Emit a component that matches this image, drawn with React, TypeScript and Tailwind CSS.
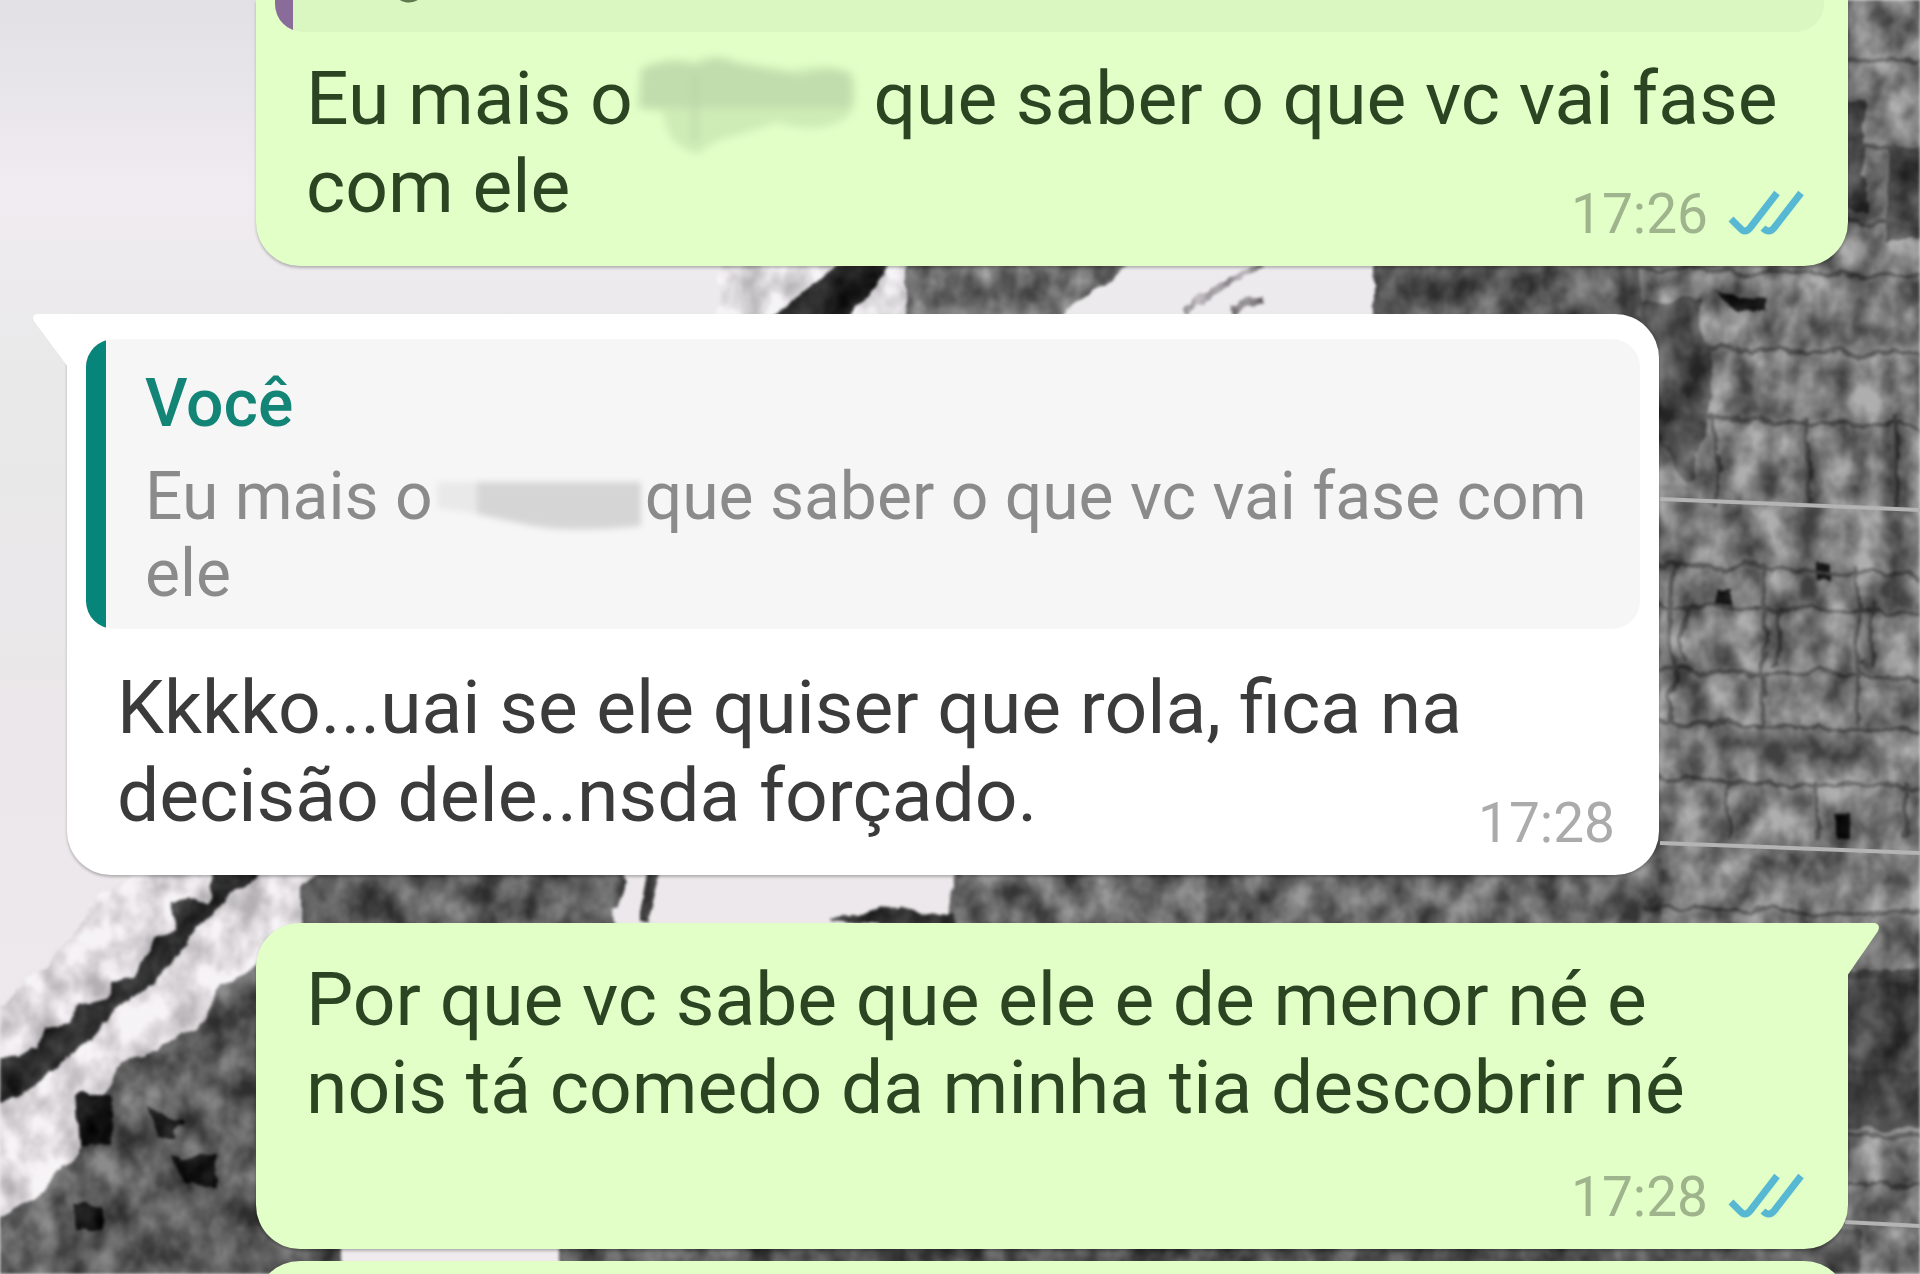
import type { ReactNode } from 'react';
import clsx from 'clsx';

type Side = 'sent' | 'received';

interface BubbleProps {
  readonly side: Side;
  readonly tail?: boolean;
  readonly className?: string;
  readonly children?: ReactNode;
}

interface MessageProps {
  readonly side: Side;
  readonly time: string;
  /** Puts the time on a row of its own below the text. */
  readonly timeBelow?: boolean;
  readonly children: ReactNode;
}

function Tail({ side }: { readonly side: Side }) {
  return side === 'received' ? (
    <svg aria-hidden viewBox="0 0 36 54" className="absolute top-0 right-full -mr-px h-[54px] w-9 fill-white">
      <path d="M36 0H5Q-1 1 2 7L36 53Z" />
    </svg>
  ) : (
    <svg aria-hidden viewBox="0 0 36 54" className="absolute top-0 left-full -ml-px h-[54px] w-9 fill-[#e1ffc7]">
      <path d="M0 0H28Q34 2 31 8L0 53Z" />
    </svg>
  );
}

function Ticks() {
  return (
    <svg role="img" aria-label="Lida" viewBox="0 0 76 48" className="mb-2 h-12 w-[76px] fill-none stroke-[#56b8d3] stroke-[7]">
      <path d="M3 29L12 38Q17 44 22 38L49 3" />
      <path d="M35 38Q41 44 46 38L73 3" />
    </svg>
  );
}

/** Smeared-out name in the sent message. */
function SentSmudge() {
  return (
    <svg aria-hidden viewBox="0 10 214 60" className="ml-2 inline-block h-[60px] w-[214px] overflow-visible align-[-4px]">
      <defs>
        <filter id="soft" x="-20%" y="-20%" width="140%" height="140%">
          <feGaussianBlur stdDeviation="4" />
        </filter>
      </defs>
      <g filter="url(#soft)">
        <path d="M0 10Q30 -4 54 4Q74 -8 96 4L150 12Q190 4 210 14Q218 30 212 50Q206 66 176 70Q150 70 138 64L94 78Q64 84 60 96Q46 94 34 84Q24 72 22 54L-4 50Z" fill="#cdecb6" />
        <path d="M0 12Q30 0 54 8Q74 -4 96 6L160 18Q190 6 210 18V50H0Z" fill="#c1ddad" />
        <path d="M54 14V84" stroke="#b9d4a7" strokeWidth="4" />
      </g>
    </svg>
  );
}

/** Smeared-out name in the quoted message. */
function QuoteSmudge() {
  return (
    <svg aria-hidden viewBox="0 0 212 60" className="inline-block h-[60px] w-[212px] overflow-visible align-[-13px]">
      <defs>
        <filter id="softer" x="-20%" y="-20%" width="140%" height="140%">
          <feGaussianBlur stdDeviation="3" />
        </filter>
      </defs>
      <g filter="url(#softer)">
        <path d="M4 10H100V46L60 44L4 36Z" fill="#e9e9e9" />
        <path d="M44 10H208V54Q130 62 90 52L44 42Z" fill="#d5d5d5" />
      </g>
    </svg>
  );
}

function Bubble({ side, tail, className, children }: BubbleProps) {
  return (
    <article
      className={clsx(
        'relative rounded-[44px] shadow-[0_2px_3px_rgba(0,0,0,0.25)]',
        side === 'sent' ? 'ml-[189px] bg-[#e1ffc7] text-[#2d4423]' : 'mr-[189px] bg-white text-[#3b3b3b]',
        tail && (side === 'sent' ? 'rounded-tr-none' : 'rounded-tl-none'),
        className
      )}
    >
      {tail && <Tail side={side} />}
      {children}
    </article>
  );
}

function Message({ side, time, timeBelow, children }: MessageProps) {
  return (
    <p className="flow-root pr-15 pb-5 pl-[50px] text-[75px] leading-[88px]">
      {children}
      <span
        className={clsx(
          'float-right -mr-4 flex items-end gap-5 text-[55px] leading-[64px]',
          timeBelow ? 'clear-both mt-[34px]' : 'mt-10',
          side === 'sent' ? 'text-[#9fb38c]' : 'text-[#ababab]'
        )}
      >
        <time>{time}</time>
        {side === 'sent' && <Ticks />}
      </span>
    </p>
  );
}

const COURSES = [52, 140, 214, 268, 345, 417, 565, 604, 668, 722, 778, 905, 972, 1060, 1128, 1176];
const JOINTS = [1672, 1716, 1764, 1806, 1858, 1893];

function Wallpaper() {
  return (
    <svg
      aria-hidden
      viewBox="0 0 1920 1274"
      preserveAspectRatio="xMidYMid slice"
      className="absolute inset-0 h-full w-full"
    >
      <defs>
        <filter id="rock" x="0" y="0" width="1920" height="1274" filterUnits="userSpaceOnUse" colorInterpolationFilters="sRGB">
          <feTurbulence type="fractalNoise" baseFrequency="0.034 0.026" numOctaves="4" seed="11" result="n" />
          <feColorMatrix in="n" type="matrix" values="1.7 0 0 0 -0.35  1.7 0 0 0 -0.35  1.7 0 0 0 -0.35  0 0 0 0 1" result="g" />
          <feDisplacementMap in="SourceGraphic" in2="n" scale="18" xChannelSelector="R" yChannelSelector="G" result="d" />
          <feComposite in="d" in2="g" operator="arithmetic" k1="0.6" k2="0.62" k3="0.14" k4="-0.05" result="m" />
          <feComposite in="m" in2="d" operator="in" result="c" />
          <feGaussianBlur in="c" stdDeviation="1.5" />
        </filter>
        <linearGradient id="sky" x1="0" y1="0" x2="0" y2="1">
          <stop offset="0" stopColor="#e2e0e4" />
          <stop offset="0.15" stopColor="#f0ecf1" />
          <stop offset="0.3" stopColor="#e9e9e9" />
          <stop offset="0.6" stopColor="#ebe7ea" />
          <stop offset="1" stopColor="#eeeaed" />
        </linearGradient>
      </defs>
      <rect width="1920" height="1274" fill="url(#sky)" />
      {/* pale rubble along the slope */}
      <g filter="url(#rock)" opacity="0.5">
        <path d="M720 250H920V330H720Z" fill="#e8e4e8" />
        <path d="M150 860H330V960L220 1060L120 1190L-30 1260V1030L50 960L100 900Z" fill="#dedade" />
      </g>
      <g filter="url(#rock)">
        {/* wall */}
        <path d="M905 240H1170L1040 330H905Z" fill="#757575" />
        <path d="M1372 240H1800V330H1372Z" fill="#5c5c5c" />
        <path d="M1640 -20H1960V1300H1640Z" fill="#7c7c7c" />
        <path d="M955 860H1660V940H945Z" fill="#6a6a6a" />
        <path d="M300 885L330 860H626L612 940H300Z" fill="#5e5e5e" />
        <path d="M-30 1280L-10 1220L40 1200L75 1150L120 1060L196 1030L215 1000L270 960H340V1300H-30Z" fill="#5f5f5f" />
        <path d="M560 1230H1860V1300H560ZM230 1230H330V1280H230Z" fill="#555" />
        <path d="M1640 300H1700L1716 400L1690 480L1650 440Z" fill="#505050" />
        <path d="M1845 970H1960V1130H1845ZM1845 100H1864V210H1845ZM1888 150H1930V240H1888Z" fill="#454545" />
        {/* cracks */}
        <path d="M-20 1065L0 1058L34 1050L40 1028L72 1024L76 1008L104 1000L110 978L136 976L150 940L176 930V905L205 900L215 870L262 868L215 905L190 940L160 975L120 1010L90 1040L30 1090L-20 1110Z" fill="#303030" />
        <path d="M765 325L810 285L850 262H892L842 325Z" fill="#262626" />
        <path d="M75 1095H110V1145H78ZM150 1105L180 1125L176 1140H156ZM170 1155H215V1185H180ZM75 1205H100V1230H75ZM1712 295L1765 300V310H1730ZM1815 560H1830V580H1815ZM1832 812H1848V836H1832ZM1716 585H1732V604H1714Z" fill="#161616" />
        <path d="M648 868H664L650 922H638ZM830 922Q870 902 955 914V930Z" fill="#333" />
        <path d="M1185 312L1262 264M1230 312L1260 300" stroke="#8e8a8e" strokeWidth="7" />
        {COURSES.map((y) => (
          <path key={y} d={`M1640 ${y}L1940 ${y + 10}`} stroke="#4e4e4e" strokeWidth="4" />
        ))}
        {JOINTS.map((x, i) => (
          <path key={x} d={`M${x} ${i % 2 ? 417 : 565}v${i % 2 ? 90 : 160}M${x + 12} ${i % 2 ? 780 : 604}v60`} stroke="#525252" strokeWidth="4" />
        ))}
      </g>
      <path d="M1660 499L1920 510M1660 843L1920 853M1845 1222L1920 1226" stroke="#b4b4b4" strokeWidth="4" />
    </svg>
  );
}

export default function App() {
  return (
    <main className="relative flex min-h-screen flex-col overflow-hidden pr-[72px] pl-[67px] font-[Roboto,sans-serif]">
      <Wallpaper />

      <Bubble side="sent" className="rounded-t-none">
        <blockquote className="mr-6 mb-[22px] ml-[19px] flex h-8 overflow-hidden rounded-b-[28px] bg-[#daf6c1]">
          <span className="w-[18px] bg-[#8a6c9a]" />
          <span className="self-end pb-7 pl-[98px] text-[66px] leading-[77px] text-[#5f7a50]">g</span>
        </blockquote>
        <Message side="sent" time="17:26">
          Eu mais o<SentSmudge /> que saber o que vc vai fase com ele
        </Message>
      </Bubble>

      <Bubble side="received" tail className="mt-12 pt-[25px]">
        <blockquote className="mx-[19px] mb-[34px] flex overflow-hidden rounded-[28px] bg-[#f6f6f6] text-[66px] leading-[77px]">
          <span className="w-5 shrink-0 bg-[#07857a]" />
          <div className="pt-[26px] pr-6 pb-[17px] pl-[39px]">
            <cite className="mb-4 block font-medium text-[#128576] not-italic">Você</cite>
            <p className="text-[#8b8b8b]">
              Eu mais o<QuoteSmudge />
              que saber o que vc vai fase com ele
            </p>
          </div>
        </blockquote>
        <Message side="received" time="17:28">
          Kkkko...uai se ele quiser que rola, fica na decisão dele..nsda forçado.
        </Message>
      </Bubble>

      <Bubble side="sent" tail className="mt-12 pt-8">
        <Message side="sent" time="17:28" timeBelow>
          Por que vc sabe que ele e de menor né e nois tá comedo da minha tia descobrir né
        </Message>
      </Bubble>

      {/* next message, only its top edge in view */}
      <div className="mt-3 min-h-0 flex-1 basis-0 overflow-hidden">
        <Bubble side="sent" className="h-24" />
      </div>
    </main>
  );
}
